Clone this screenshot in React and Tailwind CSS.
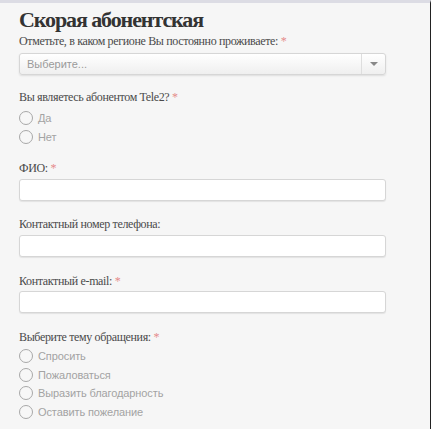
import React from 'react';

const serif = { fontFamily: '"Liberation Serif", "DejaVu Serif", serif' };
const sans = { fontFamily: '"Liberation Sans", Arial, sans-serif' };

function Label({ children, required }) {
  return (
    <div className="text-[12px] leading-[14px] text-[#4a4a4a] tracking-[-0.35px]" style={serif}>
      {children}
      {required && <span className="text-[#e58a8a]"> *</span>}
    </div>
  );
}

function Radio({ label }) {
  return (
    <label className="flex items-center gap-[5px] h-[18.5px]">
      <span className="w-[14px] h-[14px] rounded-full border-[1.5px] border-[#a8a8a8] bg-[#f7f7f7]" />
      <span className="text-[11px] text-[#a3a3a3] tracking-[-0.1px]" style={sans}>{label}</span>
    </label>
  );
}

function TextInput({ className }) {
  return (
    <div className={`${className} h-[22px] w-[367px] bg-white border border-[#d6d6d6] rounded-[3px] shadow-[0_1px_1px_rgba(0,0,0,0.08)]`} />
  );
}

export default function App() {
  return (
    <div className="w-[434px] h-[429px] bg-white flex overflow-hidden">
      <div className="w-[431px] h-full bg-[#f6f6f6] border-t-[3px] border-[#dcdce4] border-r border-r-[#222] pl-[19px]">
        <h1 className="mt-[4px] text-[22px] leading-[26px] font-bold text-[#333] tracking-[-1.1px]" style={serif}>
          Скорая абонентская
        </h1>
        <div className="mt-[1px]">
          <Label required>Отметьте, в каком регионе Вы постоянно проживаете:</Label>
        </div>
        <div className="mt-[5px] h-[22px] w-[367px] flex rounded-[3px] border border-[#d6d6d6] bg-gradient-to-b from-white to-[#efefef] shadow-[0_1px_2px_rgba(0,0,0,0.1)]">
          <div className="flex-1 flex items-center pl-[7px] text-[11px] text-[#9a9a9a]" style={sans}>
            Выберите...
          </div>
          <div className="w-[24px] border-l border-[#dedede] flex items-center justify-center">
            <span className="w-0 h-0 border-l-[4px] border-r-[4px] border-t-[4px] border-l-transparent border-r-transparent border-t-[#888]" />
          </div>
        </div>

        <div className="mt-[15px]">
          <Label required>Вы являетесь абонентом Tele2?</Label>
        </div>
        <div className="mt-[5px]">
          <Radio label="Да" />
          <Radio label="Нет" />
        </div>

        <div className="mt-[15px]">
          <Label required>ФИО:</Label>
        </div>
        <TextInput className="mt-[4px]" />

        <div className="mt-[16px]">
          <Label>Контактный номер телефона:</Label>
        </div>
        <TextInput className="mt-[4px]" />

        <div className="mt-[17px]">
          <Label required>Контактный e-mail:</Label>
        </div>
        <TextInput className="mt-[3px]" />

        <div className="mt-[17px]">
          <Label required>Выберите тему обращения:</Label>
        </div>
        <div className="mt-[3px]">
          <Radio label="Спросить" />
          <Radio label="Пожаловаться" />
          <Radio label="Выразить благодарность" />
          <Radio label="Оставить пожелание" />
        </div>
      </div>
    </div>
  );
}
